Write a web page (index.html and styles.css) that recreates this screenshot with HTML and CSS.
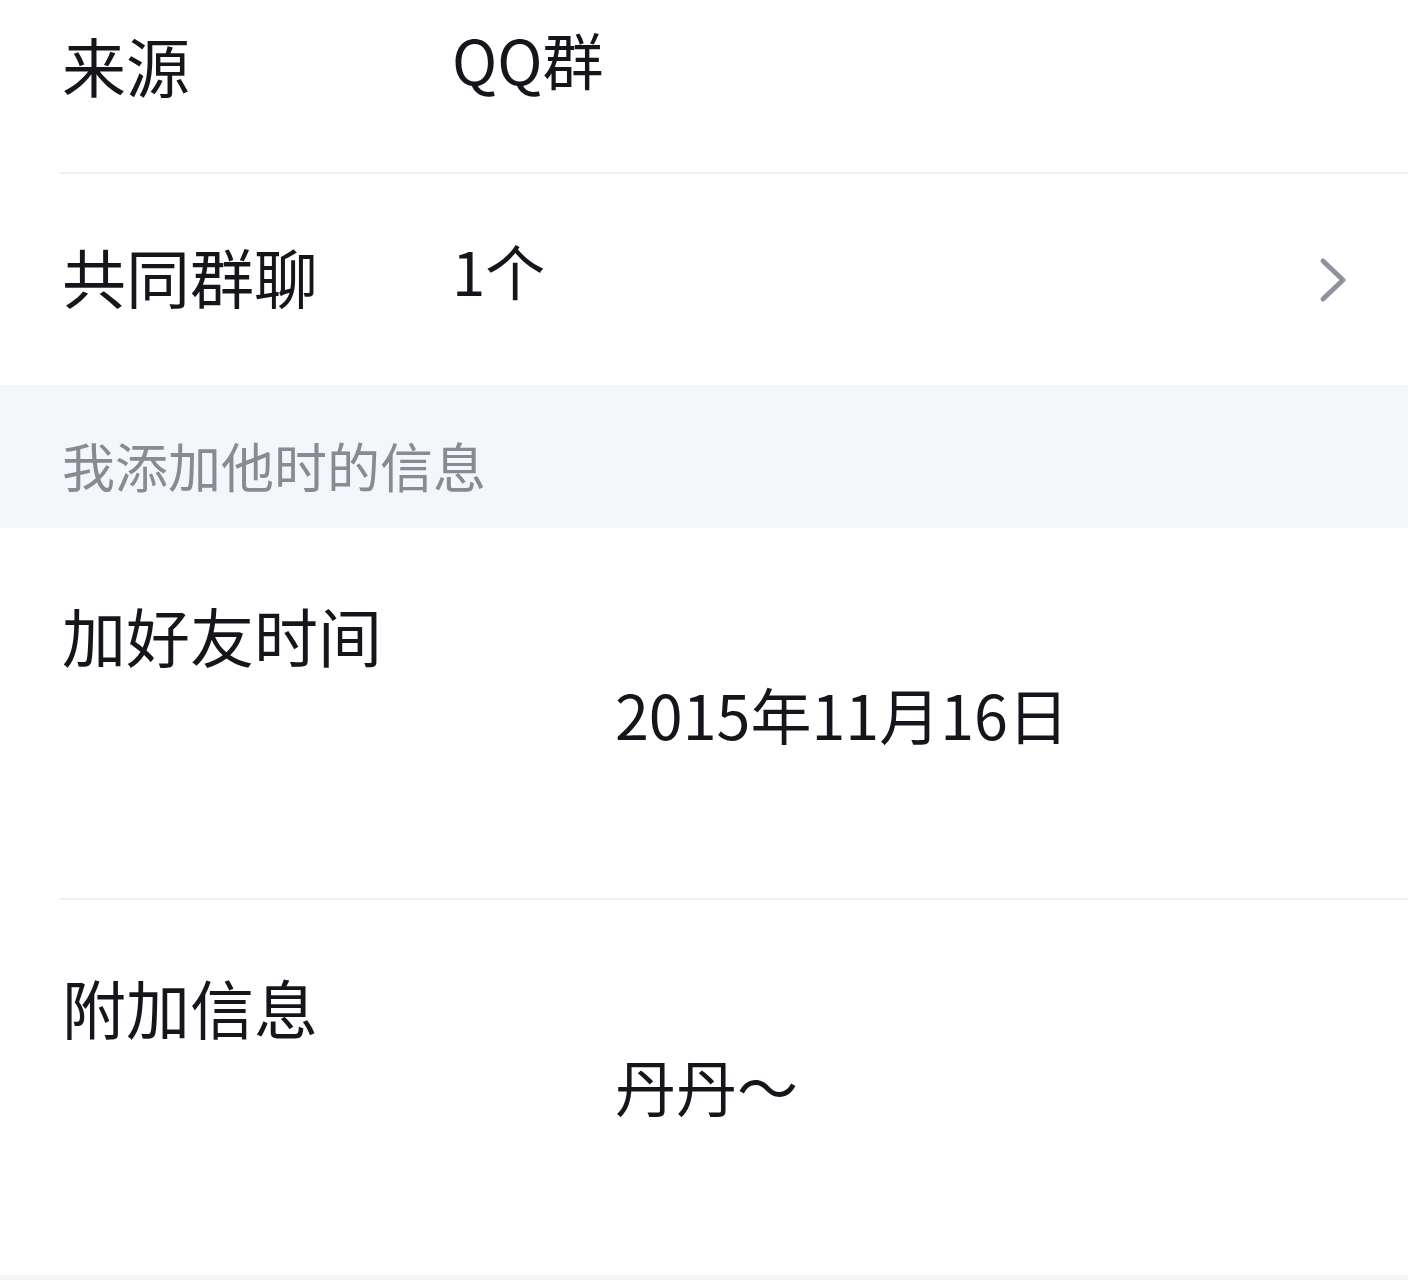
FILE: index.html
```html
<!DOCTYPE html>
<html lang="zh-CN">
<head>
<meta charset="utf-8">
<title>资料</title>
<link rel="stylesheet" href="styles.css">
</head>
<body>
<div class="page">
  <div class="row row-first">
    <div class="label">来源</div>
    <div class="value">QQ群</div>
  </div>
  <div class="row row-link">
    <div class="label">共同群聊</div>
    <div class="value">1个</div>
    <svg class="chevron" width="30" height="46" viewBox="0 0 30 46" aria-hidden="true">
      <path d="M5 4 L25 23 L5 42" fill="none" stroke="#8e939e" stroke-width="5" stroke-linecap="round" stroke-linejoin="round"/>
    </svg>
  </div>
  <div class="section-head">我添加他时的信息</div>
  <div class="row-stack">
    <div class="label">加好友时间</div>
    <div class="value-indent">2015年11月16日</div>
  </div>
  <div class="row-stack last">
    <div class="label">附加信息</div>
    <div class="value-indent">丹丹～</div>
  </div>
  <div class="footer-strip"></div>
</div>
</body>
</html>
```

FILE: styles.css
```css
html, body {
  margin: 0;
  padding: 0;
  background: #ffffff;
}

body {
  font-family: "Noto Sans CJK SC", "Noto Sans", sans-serif;
  color: #14161b;
  width: 1408px;
  height: 1280px;
  overflow: hidden;
}

.page {
  display: flex;
  flex-direction: column;
}

.row {
  display: flex;
  align-items: center;
  padding-left: 62px;
  padding-right: 62px;
  position: relative;
  box-sizing: border-box;
}

.row::after {
  content: "";
  position: absolute;
  left: 60px;
  right: 0;
  bottom: 0;
  height: 2px;
  background: #eeeff1;
}

.row-first {
  height: 174px;
  padding-bottom: 47px;
}

.row-link {
  height: 211px;
  padding-bottom: 10px;
}

.row-link::after {
  display: none;
}

.label {
  font-size: 64px;
  line-height: 80px;
  width: 390px;
  flex: none;
  white-space: nowrap;
}

.value {
  font-size: 61px;
  line-height: 80px;
  margin-bottom: 10px;
  flex: 1;
}

.row-link .value {
  font-size: 60px;
}

.chevron {
  flex: none;
  margin-right: -2px;
  margin-top: 10px;
}

.section-head {
  height: 143px;
  box-sizing: border-box;
  background: #f4f6f9;
  color: #878b93;
  font-size: 53px;
  line-height: 70px;
  padding: 45px 0 0 62px;
}

.row-stack {
  display: flex;
  flex-direction: column;
  padding: 66px 0 0 62px;
  height: 372px;
  box-sizing: border-box;
  position: relative;
}

.row-stack::after {
  content: "";
  position: absolute;
  left: 60px;
  right: 0;
  bottom: 0;
  height: 2px;
  background: #eeeff1;
}

.row-stack.last {
  height: 375px;
}

.row-stack.last::after {
  display: none;
}

.value-indent {
  font-size: 61px;
  line-height: 80px;
  margin-left: 553px;
}

.footer-strip {
  height: 5px;
  background: #f3f5f8;
}
```
